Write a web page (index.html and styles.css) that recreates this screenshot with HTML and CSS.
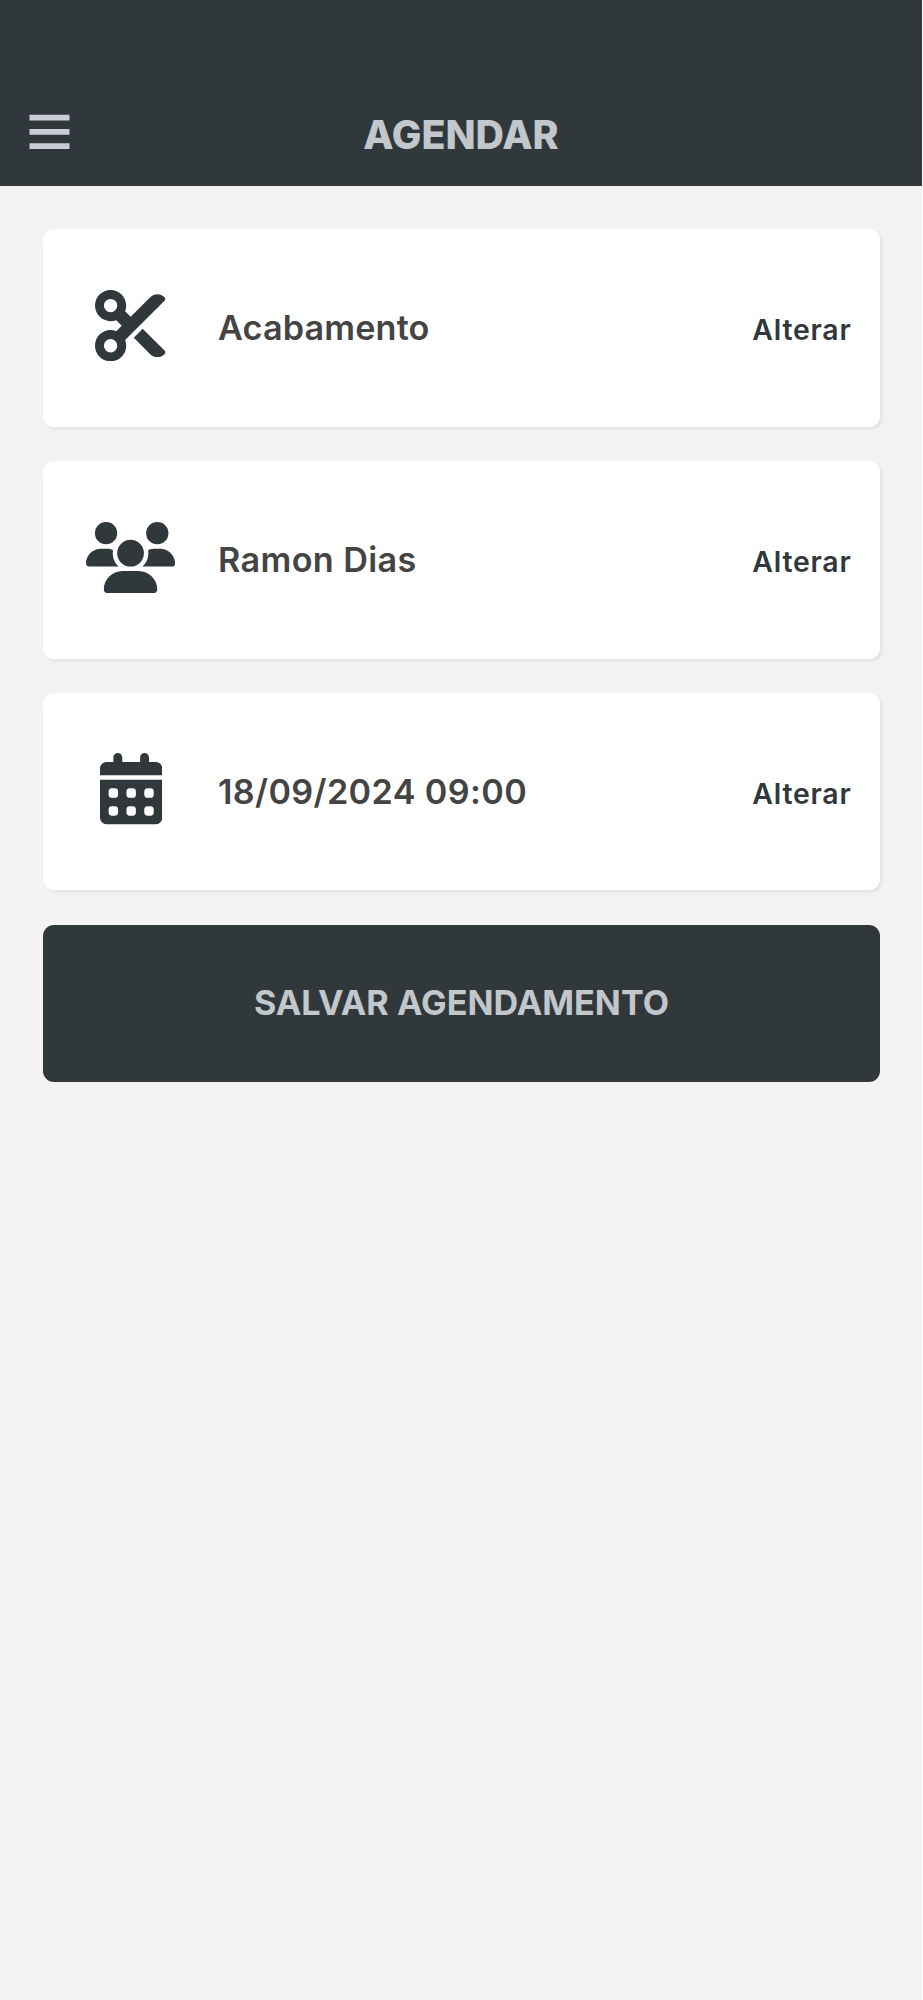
FILE: index.html
```html
<!DOCTYPE html>
<html lang="pt-BR">
<head>
<meta charset="utf-8">
<title>Agendar</title>
<link rel="stylesheet" href="styles.css">
</head>
<body>
<div class="screen">
  <header class="header">
    <button class="menu" aria-label="Menu">
      <svg viewBox="0 0 41 36" width="41" height="36"><path d="M.5 .7h40v5.8h-40zM.5 15h40v5.8h-40zM.5 29.3h40v5.8h-40z"/></svg>
    </button>
    <h1 class="title">AGENDAR</h1>
  </header>
  <main class="content">
    <section class="card">
      <div class="icon">
        <svg viewBox="0 0 512 512"><path d="M256 192l-39.5-39.5c4.9-12.6 7.5-26.2 7.5-40.5C224 50.1 173.9 0 112 0S0 50.1 0 112s50.1 112 112 112c14.3 0 27.9-2.7 40.5-7.5L192 256l-39.5 39.5c-12.6-4.9-26.2-7.5-40.5-7.5C50.1 288 0 338.1 0 400s50.1 112 112 112s112-50.1 112-112c0-14.3-2.7-27.9-7.5-40.5L499.2 76.8c7.1-7.1 7.1-18.5 0-25.6c-28.3-28.3-74.1-28.3-102.4 0L256 192zm22.6 150.6L396.8 460.8c28.3 28.3 74.1 28.3 102.4 0c7.1-7.1 7.1-18.5 0-25.6L342.6 278.6l-64 64zM64 112a48 48 0 1 1 96 0 48 48 0 1 1 -96 0zm48 240a48 48 0 1 1 0 96 48 48 0 1 1 0-96z"/></svg>
      </div>
      <span class="label service">Acabamento</span>
      <a class="change">Alterar</a>
    </section>
    <section class="card">
      <div class="icon">
        <svg viewBox="0 0 640 512"><path d="M144 0a80 80 0 1 1 0 160A80 80 0 1 1 144 0zM512 0a80 80 0 1 1 0 160A80 80 0 1 1 512 0zM0 298.7C0 239.8 47.8 192 106.7 192h42.7c15.9 0 31 3.5 44.6 9.7c-1.3 7.2-1.9 14.7-1.9 22.3c0 38.2 16.8 72.5 43.3 96H21.3C9.6 320 0 310.4 0 298.7zM405.3 320h-.7c26.6-23.5 43.3-57.8 43.3-96c0-7.6-.7-15-1.9-22.3c13.6-6.3 28.7-9.7 44.6-9.7h42.7C592.2 192 640 239.8 640 298.7c0 11.8-9.6 21.3-21.3 21.3H405.3zM224 224a96 96 0 1 1 192 0 96 96 0 1 1 -192 0zM128 485.3C128 411.7 187.7 352 261.3 352H378.7C452.3 352 512 411.7 512 485.3c0 14.7-11.9 26.7-26.7 26.7H154.7c-14.7 0-26.7-11.9-26.7-26.7z"/></svg>
      </div>
      <span class="label">Ramon Dias</span>
      <a class="change">Alterar</a>
    </section>
    <section class="card">
      <div class="icon">
        <svg viewBox="0 0 448 512">
          <path d="M128 0c17.7 0 32 14.3 32 32V64H288V32c0-17.7 14.3-32 32-32s32 14.3 32 32V64h48c26.5 0 48 21.5 48 48v48H0V112C0 85.5 21.5 64 48 64H96V32c0-17.7 14.3-32 32-32zM0 192H448V464c0 26.5-21.5 48-48 48H48c-26.5 0-48-21.5-48-48V192z"/>
          <g class="days">
            <rect x="62" y="254" width="68" height="68" rx="24"/><rect x="190" y="254" width="68" height="68" rx="24"/><rect x="318" y="254" width="68" height="68" rx="24"/>
            <rect x="62" y="382" width="68" height="68" rx="24"/><rect x="190" y="382" width="68" height="68" rx="24"/><rect x="318" y="382" width="68" height="68" rx="24"/>
          </g>
        </svg>
      </div>
      <span class="label">18/09/2024 09:00</span>
      <a class="change">Alterar</a>
    </section>
    <button class="save">SALVAR AGENDAMENTO</button>
  </main>
</div>
</body>
</html>
```
FILE: styles.css
```css
* { box-sizing: border-box; }

body {
  margin: 0;
  background: #fff;
  font-family: Inter, "Liberation Sans", sans-serif;
}

.screen {
  width: 922px;
  height: 2000px;
  background: #f3f3f3;
}

.header {
  display: grid;
  grid-template-columns: 100px 1fr 100px;
  align-items: end;
  height: 186px;
  background: #31383b;
}

.menu {
  display: flex;
  padding: 0 0 36px 28.5px;
  border: 0;
  background: none;
  fill: #caced4;
}

.title {
  margin: 0;
  padding-bottom: 28px;
  font-size: 39.4px;
  line-height: 46px;
  font-weight: 800;
  text-align: center;
  color: #c2c7cb;
}

.content {
  display: flex;
  flex-direction: column;
  gap: 34.2px;
  padding: 43.2px 42.5px 0 43.4px;
}

.card {
  display: flex;
  align-items: center;
  height: 197.6px;
  padding-right: 28px;
  border-radius: 11px;
  background: #fff;
  box-shadow: 2px 2px 4px rgba(0, 0, 0, .08);
}

.icon {
  display: flex;
  justify-content: center;
  width: 174.6px;
  padding-bottom: 5px;
}

.icon svg {
  height: 71.3px;
  fill: #31383b;
}

.icon .days { fill: #fff; }

.label {
  flex: 1;
  padding-top: 1px;
  font-size: 34.2px;
  line-height: 42px;
  font-weight: 600;
  letter-spacing: .38px;
  color: #444;
}

.service { letter-spacing: .15px; }

.change {
  padding-top: 5px;
  font-size: 28.4px;
  line-height: 36px;
  font-weight: 600;
  letter-spacing: .8px;
  color: #31383b;
}

.save {
  height: 157px;
  padding: 0;
  border: 0;
  border-radius: 11px;
  background: #31383b;
  font: 700 34.2px/42px Inter, "Liberation Sans", sans-serif;
  color: #c2c7cb;
}
```
